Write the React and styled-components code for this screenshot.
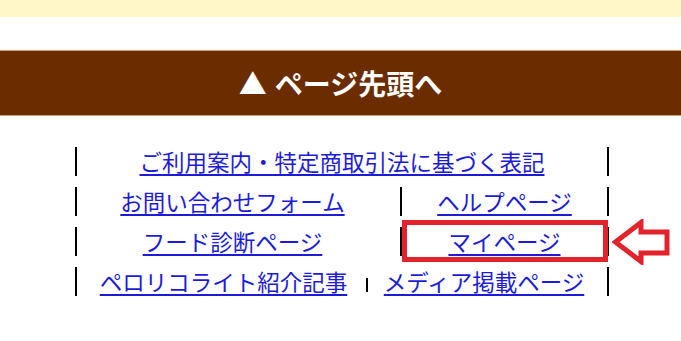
import React from "react";
import styled, { createGlobalStyle } from "styled-components";

const GlobalStyle = createGlobalStyle`
    body {
        margin: 0;
        background: #ffffff;
        font-family: "Noto Sans CJK JP", "Noto Sans", sans-serif;
    }
`

const TopBand = styled.div`
    height: 17px;
    background-color: #fff7c8;
`

const PageTopBar = styled.a`
    margin-top: 33px;
    height: 64px;
    display: flex;
    align-items: center;
    justify-content: center;
    background-color: #6b2d00;
    border-top: 1px solid #caa07c;
    border-bottom: 1px solid #caa07c;
    color: #ffffff;
    font-size: 28px;
    font-weight: bold;
    text-decoration: none;
`

const Triangle = styled.span`
    margin-right: 8px;
`

const FooterNav = styled.nav`
    width: 534px;
    margin: 31px 0 0 75px;
    display: flex;
    flex-direction: column;
    gap: 11px;
`

const Row = styled.div`
    display: grid;
    grid-template-columns: ${props => props.split ? "323px 1fr" : "1fr"};
    height: 29px;
    border-left: 2px solid #000;
    border-right: 2px solid #000;
`

const Cell = styled.div`
    position: relative;
    display: flex;
    align-items: center;
    justify-content: center;
    padding-right: ${props => props.shift ? "12px" : "0"};
    border-left: ${props => props.divider ? "2px solid #000" : "none"};
`

const Link = styled.a`
    color: #1c1cd8;
    font-size: 22.5px;
    line-height: 29px;
    text-decoration: underline;
    text-underline-offset: 3px;
    text-decoration-thickness: 1.5px;
    white-space: nowrap;
`

const Separator = styled.span`
    display: inline-block;
    width: 1.5px;
    height: 14px;
    margin: 6px 16px 0 19px;
    background-color: #000;
`

const Highlight = styled.div`
    position: absolute;
    top: -7px;
    bottom: -6px;
    left: 0;
    right: -1px;
    border: 5px solid #e3232b;
    pointer-events: none;
`

const Arrow = styled.svg`
    position: absolute;
    top: -8px;
    right: -63px;
`

const App = () => {
    return(
        <>
            <GlobalStyle />
            <TopBand />
            <PageTopBar href="#top">
                <Triangle>▲</Triangle>ページ先頭へ
            </PageTopBar>
            <FooterNav>
                <Row>
                    <Cell><Link href="#">ご利用案内・特定商取引法に基づく表記</Link></Cell>
                </Row>
                <Row split>
                    <Cell shift><Link href="#">お問い合わせフォーム</Link></Cell>
                    <Cell divider><Link href="#">ヘルプページ</Link></Cell>
                </Row>
                <Row split>
                    <Cell shift><Link href="#">フード診断ページ</Link></Cell>
                    <Cell divider>
                        <Link href="#">マイページ</Link>
                        <Highlight />
                        <Arrow width="58" height="46" viewBox="0 0 58 46">
                            <polygon
                                points="3.5,23 29,3.5 29,13 55,13 55,34 29,34 29,42.5"
                                fill="#ffffff"
                                stroke="#e3232b"
                                strokeWidth="5"
                            />
                        </Arrow>
                    </Cell>
                </Row>
                <Row>
                    <Cell>
                        <Link href="#">ペロリコライト紹介記事</Link>
                        <Separator />
                        <Link href="#">メディア掲載ページ</Link>
                    </Cell>
                </Row>
            </FooterNav>
        </>
    )
}

export default App
